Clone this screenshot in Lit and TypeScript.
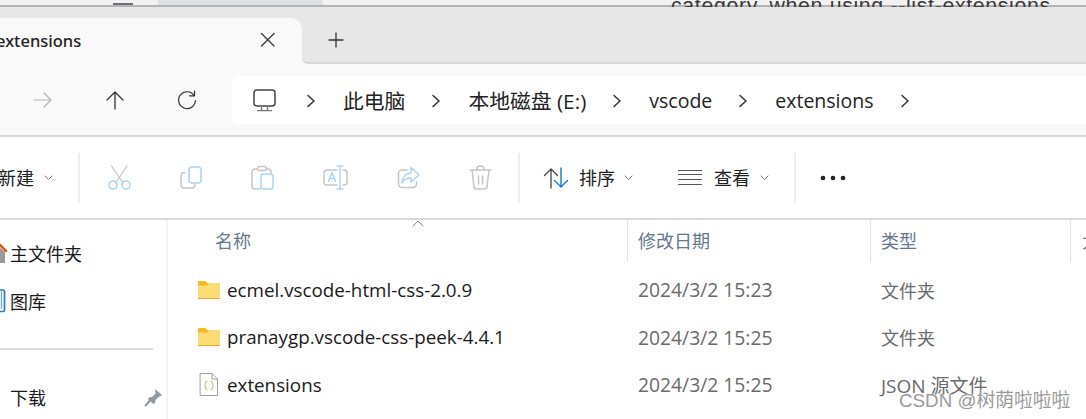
import { LitElement, html, css, svg } from "lit";
import { customElement } from "lit/decorators.js";

const G = "#c6c6c6";
const B = "#a9d5f6";
const ic = (w: number, h: number, body: unknown) =>
  html`<svg width=${w} height=${h} viewBox="0 0 ${w} ${h}" fill="none" stroke-linecap="round" stroke-linejoin="round">${body}</svg>`;

const icons = {
  close: ic(16, 16, svg`<path d="M1.5 1.5L14 14M14 1.5L1.5 14" stroke="#333" stroke-width="1.2"/>`),
  plus: ic(16, 16, svg`<path d="M8 1v14M1 8h14" stroke="#333" stroke-width="1.3"/>`),
  fwd: ic(20, 18, svg`<path d="M1 9h17M11 2l7 7-7 7" stroke="#b4b4b4" stroke-width="1.2"/>`),
  up: ic(20, 20, svg`<path d="M10 19V2M2 10l8-8 8 8" stroke="#333" stroke-width="1.3"/>`),
  refresh: ic(20, 20, svg`<path d="M17 5.5A8.4 8.4 0 1 0 18.4 10.5" stroke="#333" stroke-width="1.2"/><path d="M12.5 5.8h5V1" stroke="#333" stroke-width="1.2"/>`),
  monitor: ic(23, 23, svg`<rect x="1" y="1" width="21" height="16" rx="3" stroke="#444" stroke-width="1.5"/><path d="M8.5 17.5v3.5M14.5 17.5v3.5M4.5 21.7h14" stroke="#777" stroke-width="1.3"/>`),
  chev: ic(8, 14, svg`<path d="M1 1.5l6 5.5-6 5.5" stroke="#333" stroke-width="1.5"/>`),
  caret: ic(9, 6, svg`<path d="M1 1l3.5 3.5L8 1" stroke="#777" stroke-width="1"/>`),
  cut: ic(23, 25, svg`<path d="M3.5 1l11.5 17M19 1L7.5 18" stroke=${G} stroke-width="1.3"/><circle cx="5" cy="20" r="4" stroke=${B} stroke-width="1.6"/><circle cx="18" cy="20" r="4" stroke=${B} stroke-width="1.6"/>`),
  copy: ic(22, 23, svg`<path d="M5 6.5H4a3 3 0 0 0-3 3V19a3 3 0 0 0 3 3h8a3 3 0 0 0 3-3v-1" stroke=${G} stroke-width="1.5"/><rect x="9" y="1" width="12" height="16" rx="3" stroke=${B} stroke-width="1.6"/>`),
  paste: ic(23, 25, svg`<path d="M6.5 4H4a3 3 0 0 0-3 3v14a3 3 0 0 0 3 3h5M16 4h1a3 3 0 0 1 3 3v1" stroke=${G} stroke-width="1.5"/><rect x="6.5" y="1.5" width="9" height="4" rx="2" stroke=${G} stroke-width="1.3"/><rect x="10" y="9" width="12" height="15" rx="2.5" stroke=${B} stroke-width="1.5"/>`),
  rename: ic(25, 25, svg`<path d="M14 5H4a3 3 0 0 0-3 3v9a3 3 0 0 0 3 3h10M20 5h1a3 3 0 0 1 3 3v9a3 3 0 0 1-3 3h-1" stroke=${G} stroke-width="1.5"/><path d="M17 1v23M14 1h6M14 24h6M5.5 16.5l3.5-9 3.5 9M7 13.5h4.5" stroke=${B} stroke-width="1.4"/>`),
  share: ic(23, 23, svg`<path d="M10 4H5a3.5 3.5 0 0 0-3.5 3.5V18A3.5 3.5 0 0 0 5 21.5h11a3.5 3.5 0 0 0 3.5-3.5v-2" stroke=${G} stroke-width="1.5"/><path d="M14 1.5l8 7.5-8 7v-4c-4 0-7 1.5-9 5 .5-6 4-9.5 9-10z" stroke=${B} stroke-width="1.5"/>`),
  del: ic(23, 25, svg`<path d="M1 5h21M8 5V3.5A2.5 2.5 0 0 1 10.5 1h2A2.5 2.5 0 0 1 15 3.5V5M3 5l2 16.5A2.5 2.5 0 0 0 7.5 24h8a2.5 2.5 0 0 0 2.5-2.5L20 5M9.5 11v8M13.5 11v8" stroke=${G} stroke-width="1.5"/>`),
  sort: ic(26, 22, svg`<path d="M8 21V2M1.5 8.5L8 2l6.5 6.5" stroke="#444" stroke-width="1.3"/><path d="M18 1v19M11.5 13.5L18 20l6.5-6.5" stroke="#0f7bd4" stroke-width="1.4"/>`),
  lines: ic(24, 17, svg`<path d="M0 1.5h24M0 5.5h24M0 10.5h24M0 15.5h24" stroke="#555" stroke-width="1.2" stroke-linecap="butt"/>`),
  dots: ic(26, 6, svg`<circle cx="3" cy="3" r="2.3" fill="#222"/><circle cx="13" cy="3" r="2.3" fill="#222"/><circle cx="23" cy="3" r="2.3" fill="#222"/>`),
  sortUp: ic(12, 7, svg`<path d="M1 6l5-5 5 5" stroke="#888" stroke-width="1"/>`),
  folder: ic(22, 18, svg`<path d="M0 1a1 1 0 0 1 1-1h6l3 2.5H22V5H0z" fill="#f6b81e"/><path d="M0 4.5h9.5L12 2.5h9a1 1 0 0 1 1 1V17a1 1 0 0 1-1 1H1a1 1 0 0 1-1-1z" fill="#fcdc74"/><path d="M0 17h22v1H0z" fill="#e8ac2c"/>`),
  json: ic(18, 23, svg`<path d="M.5.5h11.5l5.5 5.5v16.5H.5z" fill="#fff" stroke="#a0a0a0"/><path d="M12 .5V6h5.5" stroke="#a0a0a0"/><path d="M7 8.5c-1.5 0-1.5 1-1.5 2s0 1.5-1 2c1 .5 1 1 1 2s0 2 1.5 2M11 8.5c1.5 0 1.5 1 1.5 2s0 1.5 1 2c-1 .5-1 1-1 2s0 2-1.5 2" stroke="#b5b04a" stroke-width="1"/>`),
  pin: ic(17, 17, svg`<path d="M10 0l7 6-2 1.5-1 0-3.5 3.5-.5 3-1.5 1L3 10l1-1.5 3-.5 3.5-3.5 0-1z" fill="#8d98a0"/><path d="M5 11.5L.5 16.5" stroke="#8d98a0" stroke-width="2"/>`),
  home: ic(6, 22, svg`<path d="M-8 10L-1 2 6 9" stroke="#d85c12" stroke-width="2.5"/><path d="M-6 10L-1 5 5 10V21H-6z" fill="#9a9a9a"/>`),
  gallery: ic(6, 24, svg`<path d="M-4 1h7a1.5 1.5 0 0 1 1.5 1.5V21a1.5 1.5 0 0 1-1.5 1.5h-7" stroke="#2d7dc4" stroke-width="1.7"/><path d="M1.5 3v16" stroke="#6aa9dc" stroke-width="1.3"/>`),
};

@customElement("app-root")
export class AppRoot extends LitElement {
  static styles = css`
    :host { display: block; width: 1086px; height: 419px; overflow: hidden; background: #fff;
      font-family: "Open Sans", "Noto Sans CJK SC", sans-serif; color: #1c1c1c; font-size: 18px; }
    svg { display: block; flex: none; overflow: visible; }
    .win { position: relative; height: 419px; overflow: hidden; }

    .strip { height: 5px; display: flex; align-items: flex-end; background: #f2f2f2; border-bottom: 2px solid #b4b4b4; }
    .strip i { display: block; height: 5px; }
    .s1 { width: 113px; }
    .s2 { width: 20px; background: #6e6e7c; height: 2px !important; }
    .s3 { width: 25px; }
    .s4 { width: 165px; background: #dfe0e4; }
    .clip { position: absolute; left: 0; right: 0; top: 0; height: 7px; overflow: hidden; }
    .behind { position: absolute; left: 671px; top: -8px; font: 21.3px/28px "Liberation Sans", sans-serif; color: #3a3a3a; white-space: nowrap; letter-spacing: .66px; }

    .tabs { height: 57px; background: #e7e7e7; display: flex; align-items: flex-end; }
    .tab { width: 302px; height: 46px; background: #f9f9f9; border-top-right-radius: 12px; display: flex; align-items: center; flex: none; }
    .tab span { width: 261px; margin-left: -4px; font: 500 16.5px/22px "Noto Sans", sans-serif; color: #222; flex: none; }
    .tab svg { margin-left: 3px; margin-bottom: 2px; }
    .tabrest { flex: 1; height: 46px; display: flex; align-items: center; padding-left: 26px; border-bottom: 2px solid #d8d8d8; border-bottom-left-radius: 6px; box-sizing: border-box; }
    .tabwrap { flex: 1; height: 46px; background: #f9f9f9; display: flex; }
    .tabwrap .tabrest { background: #e7e7e7; }

    .nav { height: 71px; background: #f9f9f9; border-bottom: 2px solid #d8d8d8; display: flex; align-items: center; }
    .navbtns { width: 232px; height: 48px; flex: none; display: flex; align-items: center; }
    .navbtns svg:nth-child(1) { margin-left: 33px; }
    .navbtns svg:nth-child(2) { margin-left: 52px; }
    .navbtns svg:nth-child(3) { margin-left: 52px; }
    .addr { flex: 1; height: 48px; background: #fff; border-radius: 6px 0 0 6px; display: flex; align-items: center; padding-left: 21px; }
    .mon { margin-right: 31px; margin-top: 2px; }
    .chev { margin-top: 2px; }
    .crumb { line-height: 28px; color: #222; white-space: nowrap; margin: 3px 27px 0 28px; }
    .cjk { font-size: 20.8px; }
    .lat { font-size: 19.5px; }

    .tool { height: 81px; display: flex; align-items: center; position: relative; }
    .tbtn { display: flex; align-items: center; flex: none; }
    .tbtn .lbl { font-size: 18px; line-height: 24px; color: #222; white-space: nowrap; }
    .sep { width: 2px; height: 50px; background: #eeeeee; flex: none; }
    .new { width: 78px; margin-left: -2px; margin-right: 2px; box-sizing: border-box; }
    .new .lbl { width: 46px; }
    .ghosts { display: flex; align-items: center; width: 438px; padding-left: 28px; box-sizing: border-box; flex: none; }
    .ghosts svg { margin-right: 49px; }
    .sortb { width: 158px; padding-left: 23px; box-sizing: border-box; }
    .sortb .lbl { margin: 0 9px 0 10px; }
    .viewb { width: 116px; }
    .viewb .lbl { margin: 0 10px 0 12px; }
    .dotsb { padding-left: 24px; }

    .body { border-top: 2px solid #d8d8d8; display: flex; height: 199px; }
    .side { width: 166px; flex: none; border-right: 2px solid #f4f4f4; padding-top: 9px; }
    .sitem { height: 48px; display: flex; align-items: center; font-size: 18px; color: #1a1a1a; }
    .sitem svg:first-child { margin-right: 4px; }
    .sdiv { height: 2px; width: 153px; background: #d8d8d8; margin: 23px 0 23px; }
    .sitem.dl { padding-left: 10px; }
    .sitem.dl span { width: 135px; }
    .main { flex: 1; position: relative; min-width: 0; }
    .hdr { height: 42px; display: grid; grid-template-columns: 460px 243px 200px 1fr; }
    .hdr div { font-size: 18px; color: #66788f; border-right: 1px solid #e3e3e3; padding: 0 0 3px 10px; box-sizing: border-box; display: flex; align-items: center; white-space: nowrap; overflow: hidden; }
    .hdr .n { padding-left: 47px; }
    .hdr div:last-child { border: 0; padding-left: 11px; }
    .sortcaret { position: absolute; left: 244px; top: 0; }
    .rows { padding-top: 4px; }
    .row { height: 47.5px; display: grid; grid-template-columns: 460px 243px 1fr; align-items: center; color: #6b6b6b; white-space: nowrap; }
    .name { display: flex; align-items: center; color: #1a1a1a; padding-left: 30px; font-size: 18.8px; }
    .ico { width: 29px; flex: none; }
    .ico.jsonic { width: 27px; margin-left: 2px; }
    .date { padding-left: 10px; font-size: 19.3px; }
    .type { padding-left: 10px; font-size: 18px; }
    .type.wide { font-size: 19px; }
    .mark { position: absolute; left: 899px; top: 389px; font: 18.8px/24px "Liberation Sans", "Noto Sans CJK SC", sans-serif; color: #9a9a9a; text-shadow: 0 0 2px #fff, 0 0 1px #fff; white-space: nowrap; }
  `;

  private rows = [
    { icon: icons.folder, cls: "", tcls: "", name: "ecmel.vscode-html-css-2.0.9", date: "2024/3/2 15:23", type: "文件夹" },
    { icon: icons.folder, cls: "", tcls: "", name: "pranaygp.vscode-css-peek-4.4.1", date: "2024/3/2 15:25", type: "文件夹" },
    { icon: icons.json, cls: "jsonic", tcls: "wide", name: "extensions", date: "2024/3/2 15:25", type: "JSON 源文件" },
  ];

  render() {
    return html`<div class="win">
      <div class="strip"><i class="s1"></i><i class="s2"></i><i class="s3"></i><i class="s4"></i></div>
      <div class="clip"><span class="behind">category, when using --list-extensions</span></div>

      <div class="tabs">
        <div class="tab"><span>extensions</span>${icons.close}</div>
        <div class="tabwrap"><div class="tabrest">${icons.plus}</div></div>
      </div>

      <div class="nav">
        <div class="navbtns">${icons.fwd}${icons.up}${icons.refresh}</div>
        <div class="addr">
          <span class="mon">${icons.monitor}</span>
          <span class="chev">${icons.chev}</span>
          <span class="crumb cjk">此电脑</span><span class="chev">${icons.chev}</span>
          <span class="crumb cjk">本地磁盘 (E:)</span><span class="chev">${icons.chev}</span>
          <span class="crumb lat">vscode</span><span class="chev">${icons.chev}</span>
          <span class="crumb lat">extensions</span><span class="chev">${icons.chev}</span>
        </div>
      </div>

      <div class="tool">
        <div class="tbtn new"><span class="lbl">新建</span>${icons.caret}</div>
        <div class="sep"></div>
        <div class="ghosts">${icons.cut}${icons.copy}${icons.paste}${icons.rename}${icons.share}${icons.del}</div>
        <div class="sep"></div>
        <div class="tbtn sortb">${icons.sort}<span class="lbl">排序</span>${icons.caret}</div>
        <div class="tbtn viewb">${icons.lines}<span class="lbl">查看</span>${icons.caret}</div>
        <div class="sep"></div>
        <div class="tbtn dotsb">${icons.dots}</div>
      </div>

      <div class="body">
        <div class="side">
          <div class="sitem">${icons.home}<span>主文件夹</span></div>
          <div class="sitem">${icons.gallery}<span>图库</span></div>
          <div class="sdiv"></div>
          <div class="sitem dl"><span>下载</span>${icons.pin}</div>
        </div>
        <div class="main">
          <div class="hdr"><div class="n">名称</div><div>修改日期</div><div>类型</div><div>大小</div></div>
          <span class="sortcaret">${icons.sortUp}</span>
          <div class="rows">
            ${this.rows.map(r => html`<div class="row">
              <div class="name"><span class="ico ${r.cls}">${r.icon}</span>${r.name}</div>
              <div class="date">${r.date}</div>
              <div class="type ${r.tcls}">${r.type}</div>
            </div>`)}
          </div>
        </div>
      </div>
      <div class="mark">CSDN @树荫啦啦啦</div>
    </div>`;
  }
}
